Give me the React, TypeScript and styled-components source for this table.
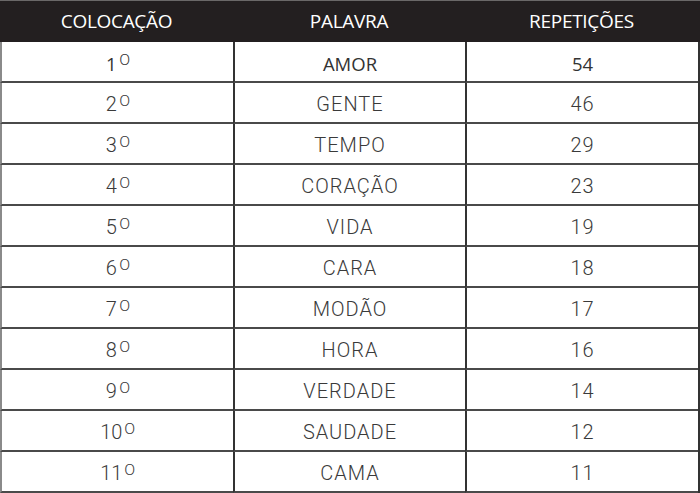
import React from "react";
import styled, { createGlobalStyle } from "styled-components";

const Global = createGlobalStyle`
  html, body { margin: 0; padding: 0; background: #ffffff; }
  body { width: 700px; height: 493px; overflow: hidden; }
`;

const Table = styled.div`
  width: 700px;
  display: flex;
  flex-direction: column;
`;

const HeaderRow = styled.div`
  display: grid;
  grid-template-columns: 233px 232px 233px 2px;
  height: 42px;
  background: #231f20;
  border-top: 1px solid #6a6868;
  box-sizing: border-box;
`;

const HeaderCell = styled.div`
  display: flex;
  align-items: center;
  justify-content: center;
  color: #ffffff;
  font-family: "Open Sans", "Liberation Sans", sans-serif;
  font-size: 19px;
  letter-spacing: -0.3px;
  padding-bottom: 1px;
`;

const Row = styled.div`
  display: grid;
  grid-template-columns: 233px 232px 233px 2px;
  height: 41px;
`;

const Cell = styled.div<{ $first?: boolean; $lead?: boolean }>`
  display: flex;
  align-items: center;
  justify-content: center;
  box-sizing: border-box;
  border-bottom: 2px solid #4a4a4a;
  border-left: ${(p) => (p.$lead ? "2px solid #8a8a8a" : "2px solid #333333")};
  color: ${(p) => (p.$first ? "#333333" : "#3a3a3a")};
  font-family: ${(p) =>
    p.$first
      ? `"Open Sans", "Liberation Sans", sans-serif`
      : `Roboto, "Liberation Sans", sans-serif`};
  font-weight: ${(p) => (p.$first ? 400 : 300)};
  font-size: ${(p) => (p.$first ? "18.5px" : "20px")};
  letter-spacing: ${(p) => (p.$first || p.$lead ? "0" : "1px")};
  padding-top: 3px;
`;

const RightEdge = styled.div`
  background: #333333;
`;

const Ordinal = styled.span`
  font-size: 14px;
  font-family: Roboto, "Liberation Sans", sans-serif;
  font-weight: 300;
  align-self: flex-start;
  margin-top: 7px;
  margin-left: 3px;
  letter-spacing: 0;
  transform: scaleX(1.15);
`;

const data: [string, number][] = [
  ["AMOR", 54],
  ["GENTE", 46],
  ["TEMPO", 29],
  ["CORAÇÃO", 23],
  ["VIDA", 19],
  ["CARA", 18],
  ["MODÃO", 17],
  ["HORA", 16],
  ["VERDADE", 14],
  ["SAUDADE", 12],
  ["CAMA", 11],
];

export default function App() {
  return (
    <>
      <Global />
      <Table>
        <HeaderRow>
          <HeaderCell>COLOCAÇÃO</HeaderCell>
          <HeaderCell>PALAVRA</HeaderCell>
          <HeaderCell>REPETIÇÕES</HeaderCell>
          <div />
        </HeaderRow>
        {data.map(([word, count], i) => {
          const first = i === 0;
          return (
            <Row key={word}>
              <Cell $first={first} $lead>
                {i + 1}
                <Ordinal>O</Ordinal>
              </Cell>
              <Cell $first={first}>{word}</Cell>
              <Cell $first={first}>{count}</Cell>
              <RightEdge />
            </Row>
          );
        })}
      </Table>
    </>
  );
}
